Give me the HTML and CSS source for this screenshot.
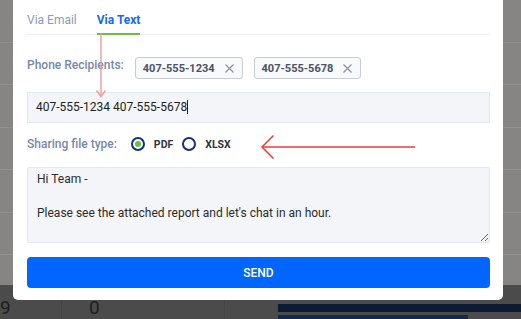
FILE: index.html
```html
<!DOCTYPE html>
<html lang="en">
<head>
    <meta charset="UTF-8">
    <meta name="viewport" content="width=device-width, initial-scale=1.0">
    <title>Share Report</title>
    <link rel="stylesheet" href="styles.css">
</head>
<body>

    <!-- page behind the dialog (dimmed) -->
    <div class="page">
        <div class="rows">
            <div class="row"></div>
            <div class="row"></div>
            <div class="row"></div>
            <div class="row"></div>
            <div class="row"></div>
            <div class="row"></div>
            <div class="row"></div>
        </div>
        <div class="footer">
            <span class="cell cell-a">9</span>
            <span class="cell cell-b">0</span>
            <span class="cell cell-c"></span>
            <div class="bars">
                <div class="bar bar-top"></div>
                <div class="bar bar-bottom"></div>
            </div>
        </div>
    </div>

    <!-- share dialog -->
    <div class="modal">
        <div class="tabs">
            <span class="tab">Via Email</span>
            <span class="tab active">Via Text</span>
        </div>

        <div class="recipients">
            <span class="label label-top">Phone Recipients:</span>
            <span class="chip">
                <span>407-555-1234</span>
                <svg class="chip-x" width="9" height="9" viewBox="0 0 9 9"><path d="M0.5 0.5 L8.5 8.5 M8.5 0.5 L0.5 8.5"/></svg>
            </span>
            <span class="chip">
                <span>407-555-5678</span>
                <svg class="chip-x" width="9" height="9" viewBox="0 0 9 9"><path d="M0.5 0.5 L8.5 8.5 M8.5 0.5 L0.5 8.5"/></svg>
            </span>
        </div>

        <div class="field">407-555-1234 407-555-5678<span class="caret"></span></div>

        <div class="filetype">
            <span class="label">Sharing file type:</span>
            <span class="radio checked"></span>
            <span class="radio-text">PDF</span>
            <span class="radio"></span>
            <span class="radio-text">XLSX</span>
        </div>

        <textarea class="message">Hi Team -

Please see the attached report and let's chat in an hour.</textarea>

        <button class="send">SEND</button>
    </div>

    <!-- annotation arrows drawn over the screenshot -->
    <svg class="marks" width="521" height="319" viewBox="0 0 521 319">
        <g fill="none" stroke="#f09a9a" stroke-width="1.4">
            <path d="M101 33 V97"/>
            <path d="M96.5 90.5 L101 96.5 L105.5 90.5"/>
        </g>
        <g fill="none" stroke="#ef3a3a" stroke-width="1.5">
            <path d="M262 147 H415"/>
            <path d="M273.5 135.5 L262 147 L273.5 158.5"/>
        </g>
    </svg>

</body>
</html>
```

FILE: styles.css
```css
body {
    margin: 0;
    width: 521px;
    height: 319px;
    overflow: hidden;
    position: relative;
    font-family: Roboto, "Liberation Sans", sans-serif;
    background: #4b4b4b;
}

/* ---- dimmed page behind ---- */
.page {
    display: flex;
    flex-direction: column;
    height: 319px;
}

.rows {
    height: 285px;
    background: #878584;
}

.row {
    height: 41.5px;
    border-bottom: 1px solid #93908f;
}

.footer {
    flex: 1;
    display: flex;
    background: #4b4b4b;
}

.cell {
    box-sizing: border-box;
    padding-top: 13px;
    font-size: 19px;
    line-height: 20px;
    color: #1e1e1e;
    border-right: 1px solid #444;
}

.cell-a {
    width: 62px;
}

.cell-b {
    width: 163px;
    padding-left: 27px;
}

.cell-c {
    width: 53px;
    border-right: none;
}

.bars {
    flex: 1;
    padding-top: 19px;
}

.bar {
    background: #0c1a33;
    height: 8px;
}

.bar-bottom {
    margin-top: 3px;
    width: 190px;
    height: 5px;
    background: #14284c;
}

/* ---- dialog ---- */
.modal {
    position: absolute;
    left: 13px;
    top: 0;
    width: 490px;
    height: 300px;
    box-sizing: border-box;
    padding: 0 13px 0 14px;
    background: #fff;
    border-radius: 0 0 5px 5px;
}

.tabs {
    display: flex;
    gap: 20px;
    border-bottom: 1px solid #eef0f3;
}

.tab {
    font-size: 12px;
    line-height: 20px;
    padding: 10px 0 3px;
    margin-bottom: -1px;
    border-bottom: 2px solid transparent;
    color: #8b9bba;
}

.tab.active {
    color: #1668f5;
    font-weight: 700;
    border-bottom-color: #6bbf3c;
}

.label {
    font-size: 12px;
    font-weight: 500;
    color: #7689ad;
}

.recipients {
    display: flex;
    align-items: flex-start;
    gap: 11px;
    margin-top: 22px;
}

.label-top {
    line-height: 14px;
    margin-top: 1px;
}

.chip {
    display: flex;
    align-items: center;
    gap: 10px;
    height: 20px;
    padding: 0 8px 0 7px;
    border: 1px solid #c9ccd3;
    border-radius: 3px;
    background: #f8f9fb;
    font-size: 11px;
    font-weight: 700;
    color: #4a5266;
}

.chip-x {
    stroke: #8a8f99;
    stroke-width: 1.1;
}

.field {
    margin-top: 13px;
    height: 29px;
    line-height: 29px;
    padding: 0 8px;
    border: 1px solid #e4e8ee;
    border-top-color: #dcefea;
    background: #f4f5f9;
    font-size: 12px;
    color: #222;
}

.caret {
    display: inline-block;
    width: 1px;
    height: 14px;
    background: #222;
    vertical-align: -3px;
}

.filetype {
    display: flex;
    align-items: center;
    height: 14px;
    margin-top: 14px;
}

.filetype .label {
    margin-right: 14px;
}

.radio {
    width: 10px;
    height: 10px;
    border: 2px solid #163078;
    border-radius: 50%;
    position: relative;
}

.radio.checked::after {
    content: "";
    position: absolute;
    left: 2px;
    top: 2px;
    width: 6px;
    height: 6px;
    border-radius: 50%;
    background: #5dc73a;
}

.radio-text {
    margin: 0 9px;
    font-size: 10.5px;
    font-weight: 700;
    color: #2e3440;
}

.message {
    display: block;
    box-sizing: border-box;
    width: 100%;
    height: 76px;
    margin-top: 16px;
    padding: 3px 9px;
    border: 1px solid #e6e7ec;
    border-radius: 2px;
    background: #f4f5f9;
    font-family: Roboto, "Liberation Sans", sans-serif;
    font-size: 12px;
    line-height: 17px;
    color: #2b2b2b;
}

.send {
    display: block;
    width: 100%;
    height: 31px;
    margin-top: 14px;
    border: none;
    border-radius: 4px;
    background: #0066ff;
    color: #fff;
    font-family: Roboto, "Liberation Sans", sans-serif;
    font-size: 12px;
    font-weight: 500;
}

.marks {
    position: absolute;
    left: 0;
    top: 0;
    pointer-events: none;
}
```
